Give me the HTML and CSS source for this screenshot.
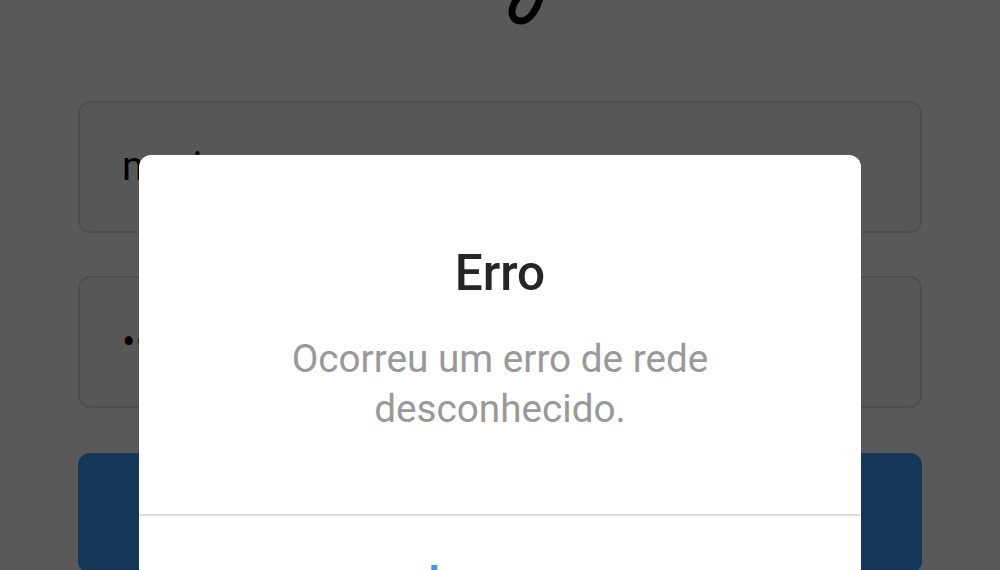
FILE: index.html
```html
<!DOCTYPE html>
<html lang="pt-BR">
<head>
    <meta charset="UTF-8">
    <meta name="viewport" content="width=device-width, initial-scale=1.0">
    <title>Erro</title>
    <link rel="stylesheet" href="styles.css">
</head>
<body>
    <main class="login">
        <svg class="logo-tail" width="100" height="30" viewBox="0 0 100 30">
            <path d="M91 -6C88 8 80 21 71 21C62 21 60 12 64 4C66 0 68 -3 70 -6" fill="none" stroke="#000" stroke-width="7"/>
        </svg>
        <div class="field">mari</div>
        <div class="field field-password">••••••••</div>
        <div class="login-btn"></div>
    </main>

    <div class="overlay">
        <div class="dialog">
            <div class="dialog-body">
                <h2 class="dialog-title">Erro</h2>
                <p class="dialog-text">Ocorreu um erro de rede desconhecido.</p>
            </div>
            <div class="dialog-action">Ignorar</div>
        </div>
    </div>
</body>
</html>
```

FILE: styles.css
```css
* {
    margin: 0;
    padding: 0;
    box-sizing: border-box;
}

html, body {
    height: 570px;
    overflow: hidden;
}

body {
    font-family: Roboto, "Liberation Sans", sans-serif;
    background-color: #fff;
    position: relative;
}

.login {
    display: flex;
    flex-direction: column;
    padding: 0 78px;
}

.logo-tail {
    display: block;
    margin: 0 auto 71px;
}

.field {
    height: 132px;
    margin-bottom: 43px;
    padding: 34px 42px 0;
    background-color: #fafafa;
    border: 2px solid #e0e0e0;
    border-radius: 12px;
    color: #000;
    font-size: 40px;
    line-height: 60px;
    white-space: nowrap;
}

.field-password {
    margin-bottom: 45px;
    padding-top: 35px;
}

.login-btn {
    height: 120px;
    background-color: #3a9bff;
    border-radius: 12px;
}

.overlay {
    position: absolute;
    top: 0;
    left: 0;
    width: 100%;
    height: 100%;
    padding-top: 155px;
    display: flex;
    justify-content: center;
    align-items: flex-start;
    background-color: rgba(0, 0, 0, 0.65);
}

.dialog {
    width: 722px;
    background-color: #fff;
    border-radius: 12px;
    text-align: center;
}

.dialog-body {
    height: 361px;
    padding: 88px 100px 0;
    border-bottom: 2px solid #dcdcdc;
}

.dialog-title {
    color: #262626;
    font-size: 49.5px;
    font-weight: 500;
    line-height: 60px;
    margin-bottom: 31px;
}

.dialog-text {
    color: #999;
    font-size: 38.7px;
    line-height: 50px;
}

.dialog-action {
    padding-top: 40px;
    color: #3897f0;
    font-size: 40px;
    font-weight: 700;
    letter-spacing: 2px;
    line-height: 50px;
}
```
